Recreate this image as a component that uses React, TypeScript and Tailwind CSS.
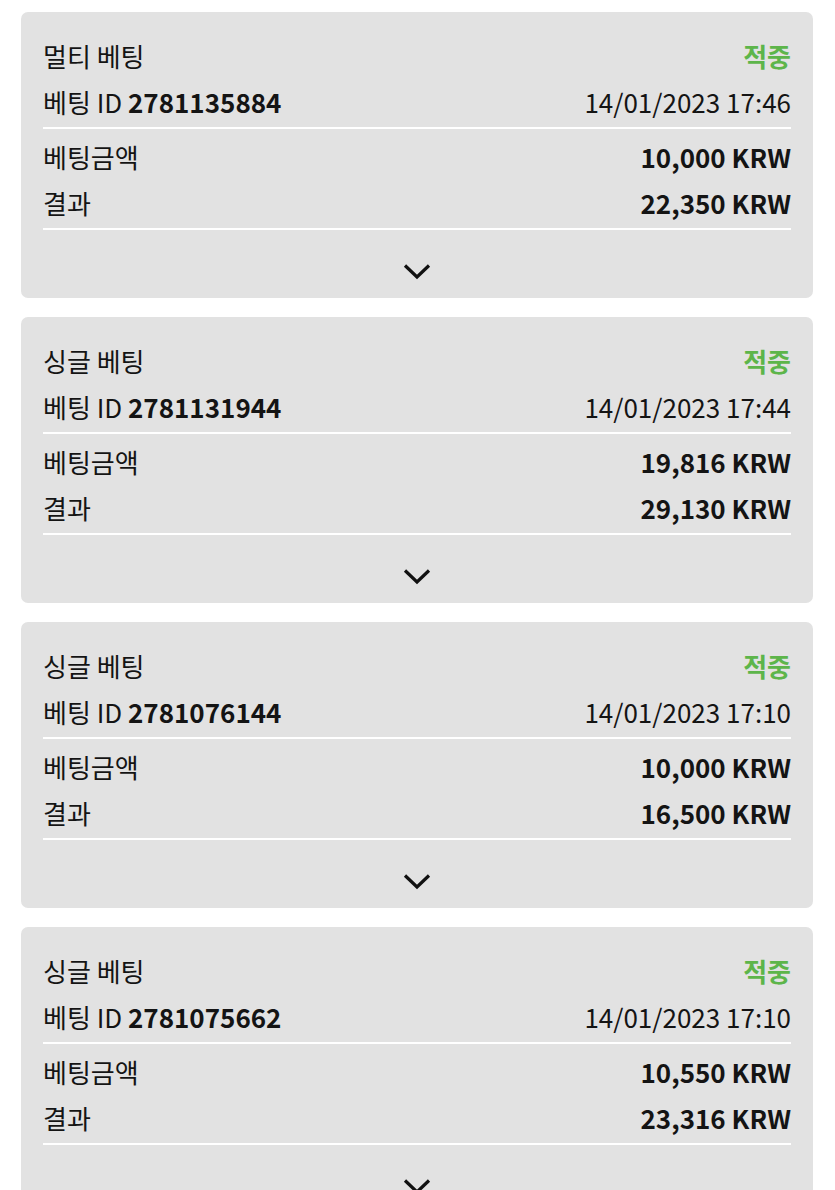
const bets = [
  { type: "멀티 베팅", id: "2781135884", date: "14/01/2023 17:46", stake: "10,000 KRW", result: "22,350 KRW" },
  { type: "싱글 베팅", id: "2781131944", date: "14/01/2023 17:44", stake: "19,816 KRW", result: "29,130 KRW" },
  { type: "싱글 베팅", id: "2781076144", date: "14/01/2023 17:10", stake: "10,000 KRW", result: "16,500 KRW" },
  { type: "싱글 베팅", id: "2781075662", date: "14/01/2023 17:10", stake: "10,550 KRW", result: "23,316 KRW" },
];

type Bet = (typeof bets)[number];

function Chevron() {
  return (
    <svg width="28" height="17" viewBox="0 0 28 17" fill="none">
      <path d="M2 2.5 L14 14 L26 2.5" stroke="#111" strokeWidth="3.2" />
    </svg>
  );
}

function BetCard({ bet }: { bet: Bet }) {
  return (
    <div className="rounded-[7px] bg-[#e2e2e2] px-[22px] pt-[22px] text-[26px] leading-none text-[#141414]">
      <div className="flex h-[47px] items-center justify-between pb-[4px]">
        <span>{bet.type}</span>
        <span className="font-bold text-[#5db54a]">적중</span>
      </div>
      <div className="flex h-[48px] items-center justify-between border-b-2 border-white pb-[4px]">
        <span>
          베팅 ID <span className="font-bold">{bet.id}</span>
        </span>
        <span>{bet.date}</span>
      </div>
      <div className="pt-[6px]">
        <div className="flex h-[47px] items-center justify-between pb-[4px]">
          <span>베팅금액</span>
          <span className="font-bold">{bet.stake}</span>
        </div>
        <div className="flex h-[48px] items-center justify-between border-b-2 border-white pb-[4px]">
          <span>결과</span>
          <span className="font-bold">{bet.result}</span>
        </div>
      </div>
      <div className="flex h-[68px] items-start justify-center pt-[33px]">
        <Chevron />
      </div>
    </div>
  );
}

export default function App() {
  return (
    <div
      className="flex min-h-[1190px] flex-col gap-[19px] bg-white pt-[12px] pr-[22px] pl-[21px]"
      style={{ fontFamily: '"Noto Sans CJK KR", "Noto Sans", sans-serif' }}
    >
      {bets.map((bet) => (
        <BetCard key={bet.id} bet={bet} />
      ))}
    </div>
  );
}
